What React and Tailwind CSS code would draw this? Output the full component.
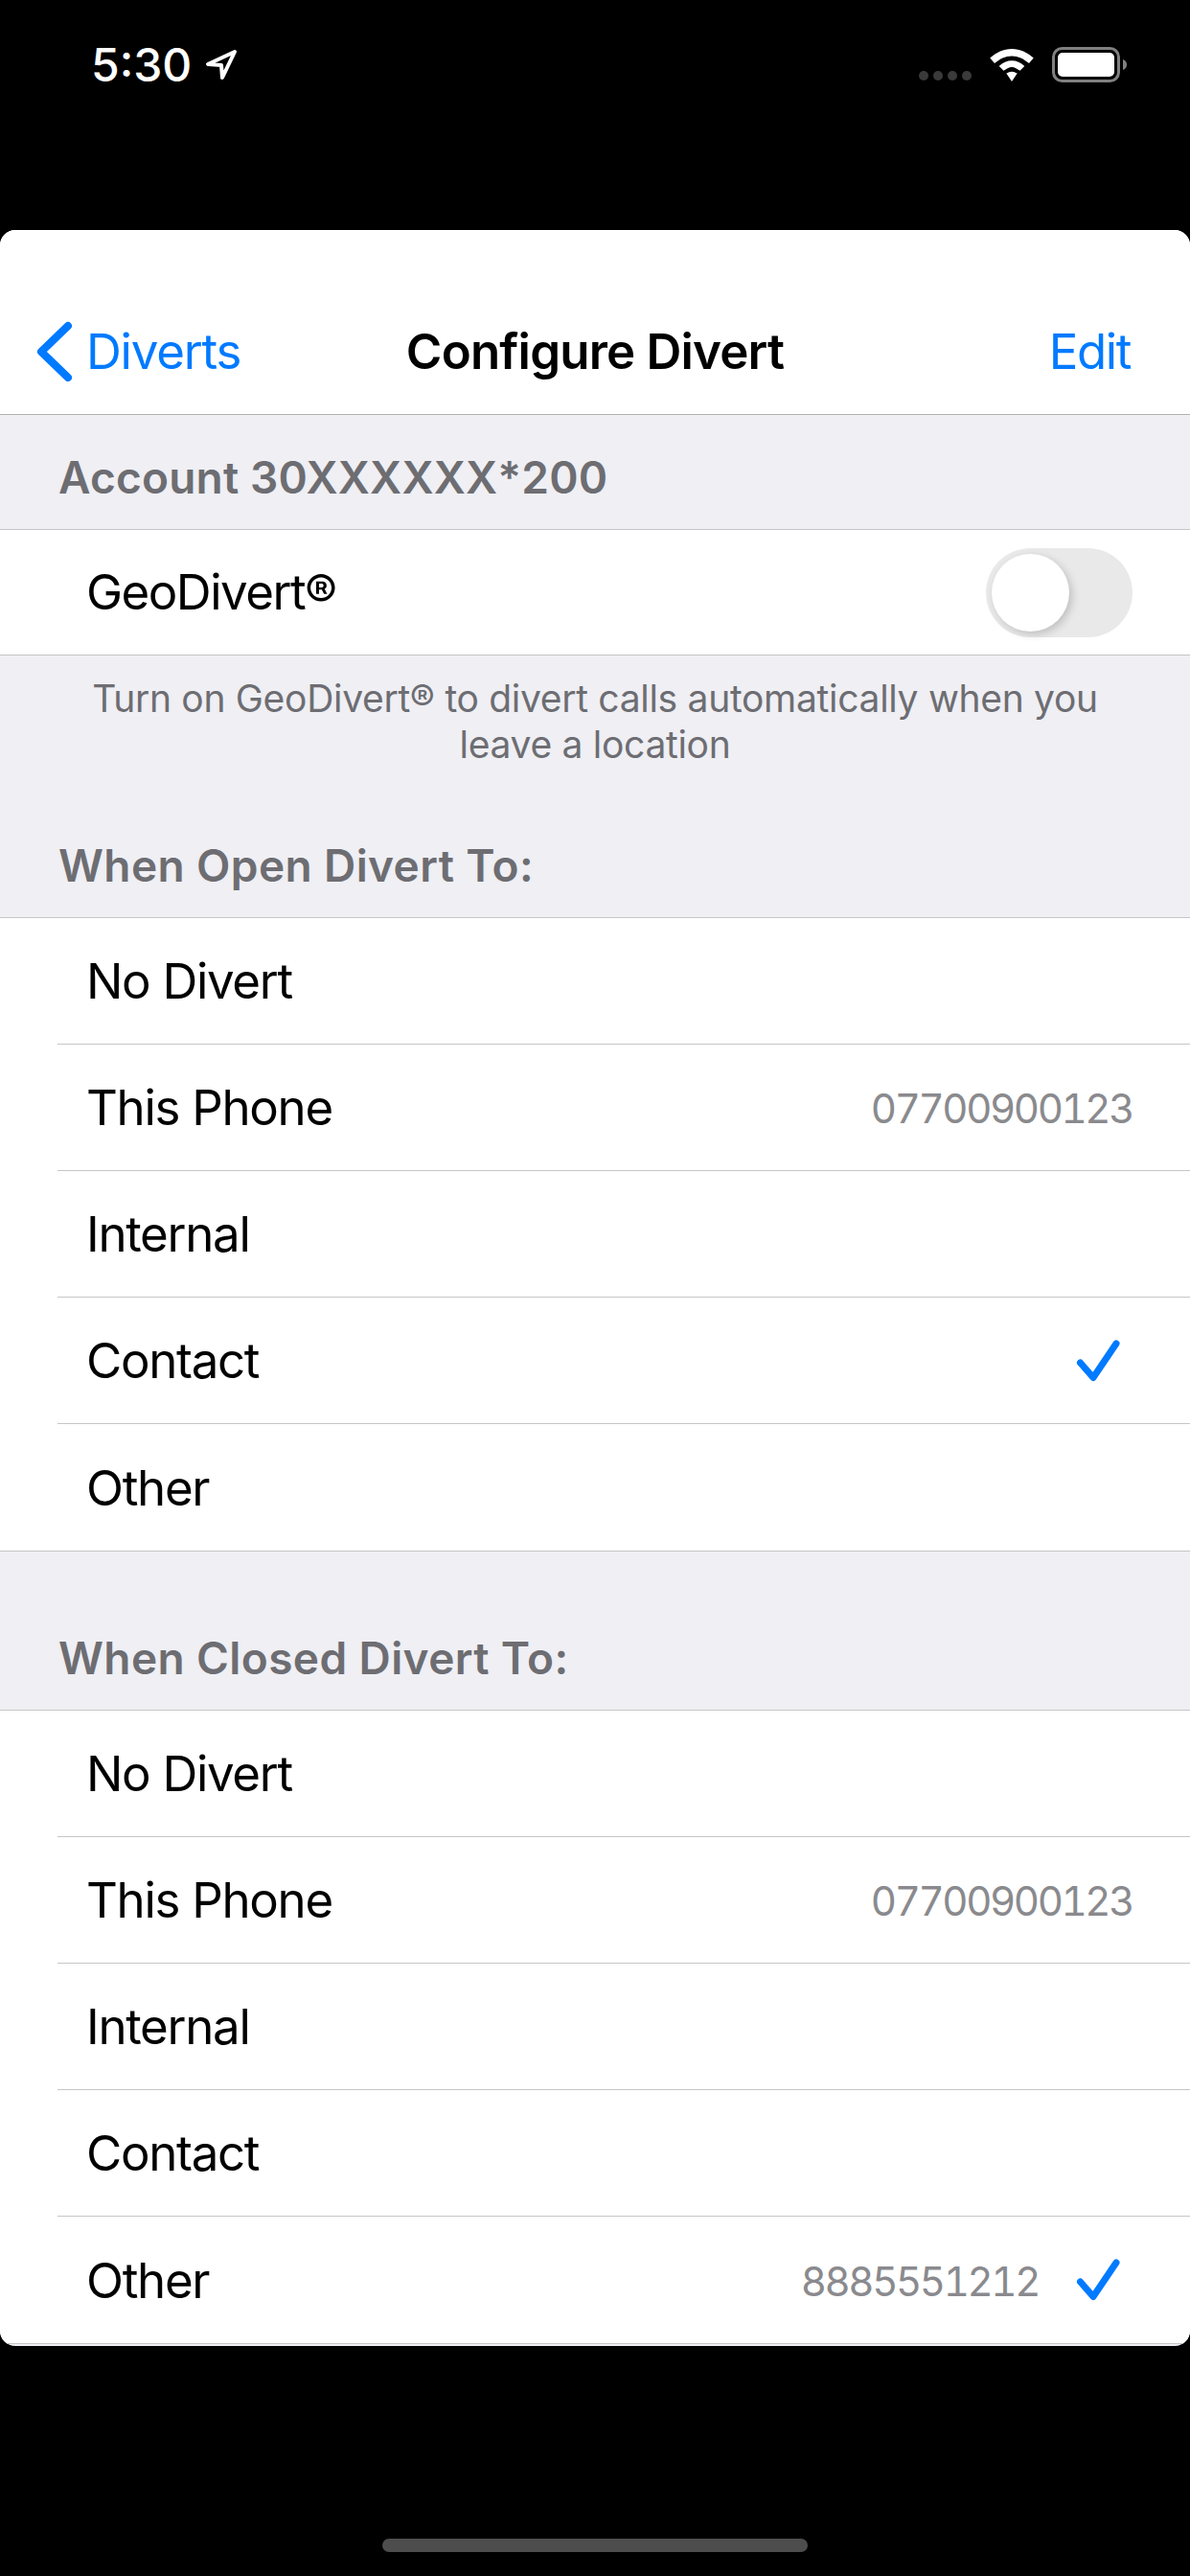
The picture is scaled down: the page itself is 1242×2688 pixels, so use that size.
import React from 'react';

const font = "font-['Inter','Liberation_Sans',sans-serif]";

const Check = () => (
  <svg width="46" height="44" viewBox="0 0 46 44" fill="none" stroke="#007aff" strokeWidth="7" strokeLinecap="round" strokeLinejoin="round">
    <path d="M4.5 24 L18 39.5 L42 4" />
  </svg>
);

const Row = ({ label, value, checked, last }) => (
  <div className="h-[132px] flex items-stretch pl-[60px]">
    <div className={`flex-1 flex items-center pl-[30px] pr-[60px] ${last ? '' : 'border-b border-[#c6c6c8]'}`}>
      <span className="text-[51px] text-black tracking-[-1.3px] pt-[2px]">{label}</span>
      <span className="ml-auto text-[42px] text-[#8a8a8e] tabular-nums tracking-[-2.4px] pt-[2px]">{value}</span>
      {checked && <span className="ml-[39px] mr-[13px] flex"><Check /></span>}
    </div>
  </div>
);

const Section = ({ title, rows, headerClass }) => (
  <div>
    <div className={`${headerClass} flex items-end pl-[61px] pb-[30px] border-b border-[#c6c6c8]`}>
      <span className="text-[46px] leading-[48px] font-semibold text-[#6d6d72] tracking-[0.4px]">{title}</span>
    </div>
    <div className="bg-white border-b border-[#c6c6c8]">
      {rows.map((r, i) => <Row key={i} {...r} last={i === rows.length - 1} />)}
    </div>
  </div>
);

export default function App() {
  return (
    <div className={`${font} w-[1242px] h-[2688px] bg-black flex flex-col overflow-hidden`}>
      {/* status bar */}
      <div className="h-[240px] shrink-0 flex items-start justify-between pl-[95px] pr-[65px] pt-[49px] text-white">
        <div className="flex items-center gap-[14px] h-[37px]">
          <span className="text-[48px] leading-[37px] font-medium">5:30</span>
          <svg width="34" height="33" viewBox="0 0 34 33" fill="none" stroke="white" strokeWidth="4" strokeLinejoin="round"><path d="M31 3 L3 16 L17 17 L18 30 Z" /></svg>
        </div>
        <div className="flex items-center gap-[18px] h-[37px]">
          <div className="flex gap-[5px] mt-[23px]">
            {[0, 1, 2, 3].map(i => <span key={i} className="w-[10px] h-[10px] rounded-full bg-[#3a3a3a]" />)}
          </div>
          <svg width="48" height="36" viewBox="0 0 50 38" fill="white">
            <path d="M25 1 C34 1 42 5 49 11 L44 17 C38 12 32 9 25 9 C18 9 12 12 6 17 L1 11 C8 5 16 1 25 1 Z" />
            <path d="M25 14 C30 14 35 16 39 20 L34 25 C31 23 28 21 25 21 C22 21 19 23 16 25 L11 20 C15 16 20 14 25 14 Z" />
            <path d="M25 26 C27 26 29 27 31 28 L25 37 L19 28 C21 27 23 26 25 26 Z" />
          </svg>
          <svg width="79" height="37" viewBox="0 0 79 37" fill="none">
            <rect x="1.5" y="1.5" width="68" height="34" rx="9" stroke="#808080" strokeWidth="3" />
            <rect x="6" y="6" width="59" height="25" rx="5" fill="white" />
            <path d="M74 13 C77 14 78 16 78 18.5 C78 21 77 23 74 24 Z" fill="#808080" />
          </svg>
        </div>
      </div>

      <div className="w-full h-[2208px] shrink-0 rounded-[16px] overflow-hidden bg-[#efeff4] flex flex-col">
        {/* nav bar */}
        <div className="h-[193px] shrink-0 bg-white border-b border-[#b2b2b2] flex items-center relative pl-[38px] pr-[62px] pt-[62px]">
          <svg width="38" height="64" viewBox="0 0 38 64" fill="none" stroke="#007aff" strokeWidth="8" strokeLinecap="round" strokeLinejoin="round"><path d="M33 5 L5 32 L33 59" /></svg>
          <span className="text-[51px] text-[#007aff] ml-[14px] tracking-[-1.2px]">Diverts</span>
          <span className="absolute left-0 right-0 text-center text-[51px] font-semibold text-black tracking-[-0.8px]">Configure Divert</span>
          <span className="ml-auto text-[51px] text-[#007aff] tracking-[-1.4px]">Edit</span>
        </div>

        <div className="h-[120px] shrink-0 flex items-center pl-[61px] pt-[12px] border-b border-[#c6c6c8]">
          <span className="text-[46px] font-semibold text-[#6d6d72] tracking-[0.2px]">Account 30XXXXXX*200</span>
        </div>
        <div className="h-[131px] shrink-0 bg-white border-b border-[#c6c6c8] flex items-center pl-[90px] pr-[60px]">
          <span className="text-[51px] text-black tracking-[-1.5px]">GeoDivert®</span>
          <div className="ml-auto w-[153px] h-[93px] rounded-full bg-[#e9e9ea] p-[6px]">
            <div className="w-[81px] h-[81px] rounded-full bg-white shadow-[3px_3px_8px_rgba(0,0,0,0.18)]" />
          </div>
        </div>
        <div className="h-[117px] shrink-0 pt-[21px] text-center text-[39px] leading-[48px] tracking-[-0.3px] text-[#6d6d72] px-[60px]">
          Turn on GeoDivert® to divert calls automatically when you leave a location
        </div>

        <Section headerClass="h-[157px]" title="When Open Divert To:" rows={[
          { label: 'No Divert' },
          { label: 'This Phone', value: '07700900123' },
          { label: 'Internal' },
          { label: 'Contact', checked: true },
          { label: 'Other' },
        ]} />
        <Section headerClass="h-[166px]" title="When Closed Divert To:" rows={[
          { label: 'No Divert' },
          { label: 'This Phone', value: '07700900123' },
          { label: 'Internal' },
          { label: 'Contact' },
          { label: 'Other', value: '8885551212', checked: true },
        ]} />
      </div>

      <div className="flex-1 flex items-end justify-center pb-[25px]">
        <div className="w-[444px] h-[14px] rounded-full bg-[#4d4d4d]" />
      </div>
    </div>
  );
}
